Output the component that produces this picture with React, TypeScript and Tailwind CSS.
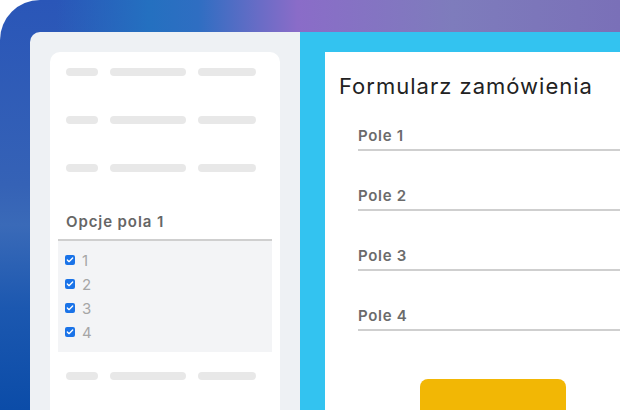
import { Check } from "lucide-react";

const font = { fontFamily: "Inter, 'Noto Sans', sans-serif" };

const SkeletonRow = () => (
  <div className="flex items-center gap-3 h-2">
    <div className="w-8 h-2 rounded-full bg-[#e8e8e8]" />
    <div className="w-[76px] h-2 rounded-full bg-[#e8e8e8]" />
    <div className="w-[58px] h-2 rounded-full bg-[#e8e8e8]" />
  </div>
);

const Field = ({ label }: { label: string }) => (
  <div className="h-[60px] flex flex-col justify-end">
    <div className="text-[15px] font-semibold tracking-[0.7px] text-[#6b6b6b] leading-5 pb-[3px]">
      {label}
    </div>
    <div className="h-[2px] bg-[#cfcfcf]" />
  </div>
);

export default function App() {
  const options = ["1", "2", "3", "4"];
  const fields = ["Pole 1", "Pole 2", "Pole 3", "Pole 4"];

  return (
    <div className="w-[620px] h-[410px] bg-white overflow-hidden" style={font}>
      <div className="w-full h-full rounded-tl-[40px] pt-8 pl-[30px] flex bg-[linear-gradient(90deg,rgba(42,86,184,0)_9%,#2470c0_24%,#2f6ec2_32%,#6a6cc6_42%,#8a6cc8_48%,#7e7cbc_73%,#7a70b8_100%),linear-gradient(180deg,#2a56b8_0%,#3562b6_45%,#3a6ab8_55%,#1c58b0_75%,#0b4ca8_100%)]">
        {/* left builder panel */}
        <div className="w-[270px] bg-[#eef1f4] rounded-tl-[10px] pt-5 pl-5 pr-5">
          <div className="bg-white rounded-t-[10px] h-[400px] pt-4">
            <div className="pl-4 flex flex-col gap-10">
              <SkeletonRow />
              <SkeletonRow />
              <SkeletonRow />
            </div>
            <div className="mx-2 mt-10">
              <div className="pl-2 text-[15px] font-semibold tracking-[0.9px] text-[#666] leading-5 pb-[7px]">
                Opcje pola 1
              </div>
              <div className="border-t-2 border-[#cfcfcf] bg-[#f3f4f6] pt-[7px] pb-2">
                {options.map((o) => (
                  <div key={o} className="h-6 flex items-center pl-[7px] gap-[7px]">
                    <div className="w-[10px] h-[10px] rounded-[2px] bg-[#1a73e8] flex items-center justify-center">
                      <Check className="w-2 h-2 text-white" strokeWidth={4} />
                    </div>
                    <span className="text-[15px] text-[#a6a6a6] leading-none">
                      {o}
                    </span>
                  </div>
                ))}
              </div>
            </div>
            <div className="pl-4 mt-5">
              <SkeletonRow />
            </div>
          </div>
        </div>

        {/* right form panel */}
        <div className="flex-1 bg-[#33c3f0] pt-5 pl-[25px]">
          <div className="bg-white h-full pl-[14px]">
            <div className="pt-[21px] text-[22px] tracking-[1px] leading-[26px] text-[#222]">
              Formularz zamówienia
            </div>
            <div className="pl-[19px] -mt-[8px]">
              {fields.map((f) => (
                <Field key={f} label={f} />
              ))}
            </div>
            <div className="pl-[81px] mt-[48px]">
              <div className="w-[146px] h-[40px] rounded-t-[8px] bg-[#f2b705]" />
            </div>
          </div>
        </div>
      </div>
    </div>
  );
}
